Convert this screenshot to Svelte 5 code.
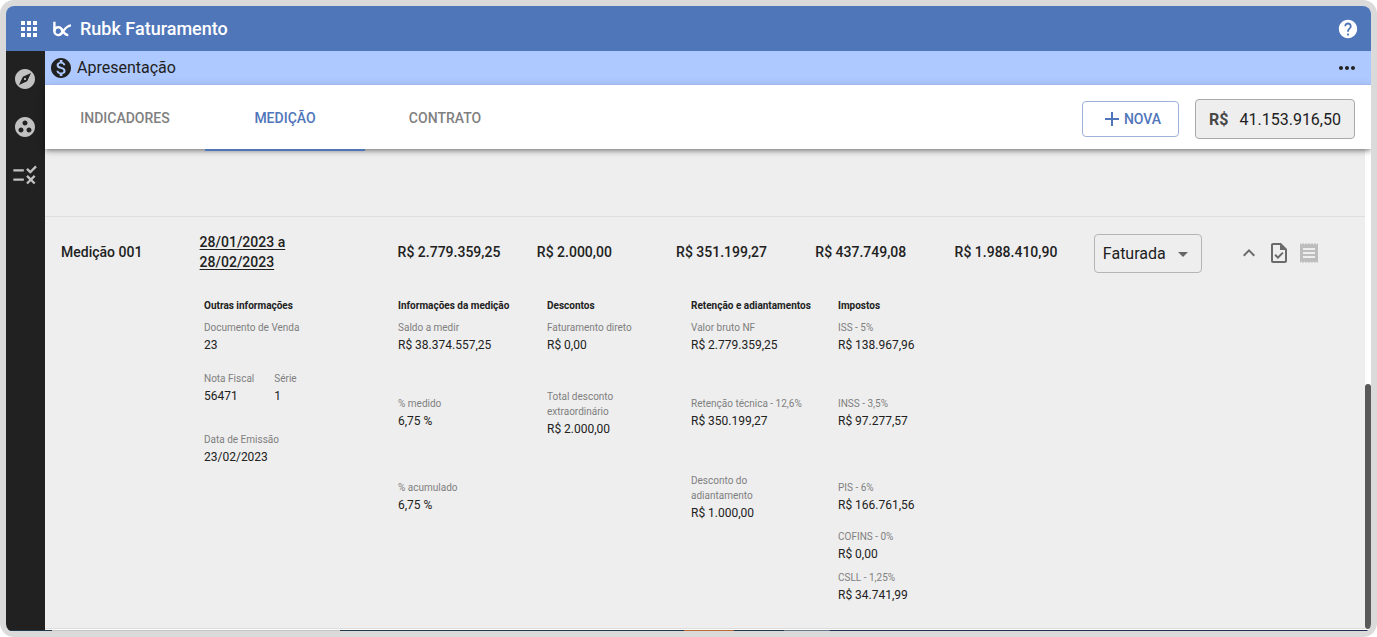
<script>
  let tab = $state('Medição');
  let status = $state('Faturada');
  const tabs = ['Indicadores', 'Medição', 'Contrato'];
  const amounts = ['R$ 2.779.359,25', 'R$ 2.000,00', 'R$ 351.199,27', 'R$ 437.749,08', 'R$ 1.988.410,90'];
  const groups = [
    {
      title: 'Informações da medição',
      items: [
        ['Saldo a medir', 'R$ 38.374.557,25'],
        ['% medido', '6,75 %'],
        ['% acumulado', '6,75 %']
      ]
    },
    {
      title: 'Descontos',
      items: [
        ['Faturamento direto', 'R$ 0,00'],
        ['Total desconto extraordinário', 'R$ 2.000,00']
      ]
    },
    {
      title: 'Retenção e adiantamentos',
      items: [
        ['Valor bruto NF', 'R$ 2.779.359,25'],
        ['Retenção técnica - 12,6%', 'R$ 350.199,27'],
        ['Desconto do adiantamento', 'R$ 1.000,00']
      ]
    },
    {
      title: 'Impostos',
      items: [
        ['ISS - 5%', 'R$ 138.967,96'],
        ['INSS - 3,5%', 'R$ 97.277,57'],
        ['PIS - 6%', 'R$ 166.761,56'],
        ['COFINS - 0%', 'R$ 0,00'],
        ['CSLL - 1,25%', 'R$ 34.741,99']
      ]
    }
  ];
  const icons = {
    apps: 'M4 8h4V4H4v4zm6 12h4v-4h-4v4zm-6 0h4v-4H4v4zm0-6h4v-4H4v4zm6 0h4v-4h-4v4zm6-10v4h4V4h-4zm-6 4h4V4h-4v4zm6 6h4v-4h-4v4zm0 6h4v-4h-4v4z',
    help: 'M12 2C6.48 2 2 6.48 2 12s4.48 10 10 10 10-4.48 10-10S17.52 2 12 2zm1 17h-2v-2h2v2zm2.07-7.75l-.9.92C13.45 12.9 13 13.5 13 15h-2v-.5c0-1.1.45-2.1 1.17-2.83l1.24-1.26c.37-.36.59-.86.59-1.41 0-1.1-.9-2-2-2s-2 .9-2 2H8c0-2.21 1.79-4 4-4s4 1.79 4 4c0 .88-.36 1.68-.93 2.25z',
    explore: 'M12 10.9c-.61 0-1.1.49-1.1 1.1s.49 1.1 1.1 1.1c.61 0 1.1-.49 1.1-1.1s-.49-1.1-1.1-1.1zM12 2C6.48 2 2 6.48 2 12s4.48 10 10 10 10-4.48 10-10S17.52 2 12 2zm2.19 12.19L6 18l3.81-8.19L18 6l-3.81 8.19z',
    group: 'M12 2C6.48 2 2 6.48 2 12s4.48 10 10 10 10-4.48 10-10S17.52 2 12 2zM8 17.5c-1.38 0-2.5-1.12-2.5-2.5s1.12-2.5 2.5-2.5 2.5 1.12 2.5 2.5-1.12 2.5-2.5 2.5zM9.5 8c0-1.38 1.12-2.5 2.5-2.5s2.5 1.12 2.5 2.5-1.12 2.5-2.5 2.5S9.5 9.38 9.5 8zm6.5 9.5c-1.38 0-2.5-1.12-2.5-2.5s1.12-2.5 2.5-2.5 2.5 1.12 2.5 2.5-1.12 2.5-2.5 2.5z',
    rule: 'M16.54 11L13 7.46l1.41-1.41 2.12 2.12 4.24-4.24 1.41 1.41L16.54 11zM11 7H2v2h9V7zm10 6.41L19.59 12 17 14.59 14.41 12 13 13.41 15.59 16 13 18.59 14.41 20 17 17.41 19.59 20 21 18.59 18.41 16 21 13.41zM11 15H2v2h9v-2z',
    money: 'M12 2C6.48 2 2 6.48 2 12s4.48 10 10 10 10-4.48 10-10S17.52 2 12 2zm1.41 16.09V20h-2.67v-1.93c-1.71-.36-3.16-1.46-3.27-3.4h1.96c.1 1.05.82 1.87 2.65 1.87 1.96 0 2.4-.98 2.4-1.59 0-.83-.44-1.61-2.67-2.14-2.48-.6-4.18-1.62-4.18-3.67 0-1.72 1.39-2.84 3.11-3.21V4h2.67v1.95c1.86.45 2.79 1.86 2.85 3.39H14.3c-.05-1.11-.64-1.87-2.22-1.87-1.5 0-2.4.68-2.4 1.64 0 .84.65 1.39 2.67 1.91s4.18 1.39 4.18 3.91c-.01 1.83-1.38 2.83-3.12 3.16z',
    more: 'M6 10c-1.1 0-2 .9-2 2s.9 2 2 2 2-.9 2-2-.9-2-2-2zm12 0c-1.1 0-2 .9-2 2s.9 2 2 2 2-.9 2-2-.9-2-2-2zm-6 0c-1.1 0-2 .9-2 2s.9 2 2 2 2-.9 2-2-.9-2-2-2z',
    add: 'M19 13h-6v6h-2v-6H5v-2h6V5h2v6h6v2z',
    up: 'M12 8l-6 6 1.41 1.41L12 10.83l4.59 4.58L18 14z',
    drop: 'M7 10l5 5 5-5z',
    task: 'M14 2H6c-1.1 0-2 .9-2 2v16c0 1.1.89 2 1.99 2H18c1.1 0 2-.9 2-2V8l-6-6zm4 18H6V4h7v5h5v11zm-9.18-6.95L7.4 14.46 10.94 18l5.66-5.66-1.41-1.41-4.24 4.24-2.13-2.12z',
    receipt: 'M18 17H6v-2h12v2zm0-4H6v-2h12v2zm0-4H6V7h12v2zM3 22l1.5-1.5L6 22l1.5-1.5L9 22l1.5-1.5L12 22l1.5-1.5L15 22l1.5-1.5L18 22l1.5-1.5L21 22V2l-1.5 1.5L18 2l-1.5 1.5L15 2l-1.5 1.5L12 2l-1.5 1.5L9 2 7.5 3.5 6 2 4.5 3.5 3 2v20z'
  };
</script>

{#snippet icon(name, size = 24)}
  <svg width={size} height={size} viewBox="0 0 24 24" fill="currentColor" aria-hidden="true"><path d={icons[name]} /></svg>
{/snippet}

{#snippet metric(label, value)}
  <div class="metric">
    <dt>{label}</dt>
    <dd>{value}</dd>
  </div>
{/snippet}

<div class="frame">
  <div class="app">
    <header class="topbar">
      <button class="icon-btn" aria-label="Aplicativos">{@render icon('apps')}</button>
      <svg class="logo" width="20" height="16" viewBox="0 0 20 16" fill="none" stroke="currentColor" stroke-width="2.4" aria-hidden="true">
        <path d="M2.400 0.800V10.200" />
        <circle cx="6.300" cy="10.200" r="3.900" />
        <path d="M6.300 14.100C11.500 14.100 11.800 4.800 19 4.400" />
        <path d="M9.300 7.600C11.200 10.600 12.400 14 16.300 14.100" />
      </svg>
      <h1>Rubk Faturamento</h1>
      <button class="icon-btn end" aria-label="Ajuda">{@render icon('help', 22)}</button>
    </header>

    <div class="body">
      <nav class="rail" aria-label="Principal">
        <button class="icon-btn" aria-label="Explorar">{@render icon('explore')}</button>
        <button class="icon-btn" aria-label="Grupos">{@render icon('group')}</button>
        <button class="icon-btn" aria-label="Regras">{@render icon('rule', 28)}</button>
      </nav>

      <main>
        <div class="titlebar">
          {@render icon('money')}
          <h2>Apresentação</h2>
          <button class="icon-btn end" aria-label="Mais opções">{@render icon('more')}</button>
        </div>

        <div class="toolbar">
          <div class="tabs" role="tablist">
            {#each tabs as name}
              <button class="tab" role="tab" class:active={tab === name} aria-selected={tab === name} onclick={() => (tab = name)}>{name}</button>
            {/each}
          </div>
          <button class="new">{@render icon('add')}Nova</button>
          <label class="total">
            <span>R$</span>
            <input type="text" value="41.153.916,50" readonly />
          </label>
        </div>

        <div class="content">
          <div class="scroll">
            <table>
              <colgroup>
                <col class="c-name" />
                <col class="c-period" />
                {#each amounts as _}<col class="c-amount" />{/each}
                <col class="c-amount" />
                <col />
              </colgroup>
              <tbody>
                <tr class="summary">
                  <td>Medição 001</td>
                  <td><a href="#periodo">28/01/2023 a<br />28/02/2023</a></td>
                  {#each amounts as amount}<td>{amount}</td>{/each}
                  <td>
                    <div class="select">
                      <select aria-label="Situação" bind:value={status}>
                        <option>Faturada</option>
                      </select>
                      {@render icon('drop')}
                    </div>
                  </td>
                  <td>
                    <div class="actions">
                      <button class="icon-btn" aria-label="Recolher">{@render icon('up')}</button>
                      <button class="icon-btn" aria-label="Aprovar">{@render icon('task')}</button>
                      <button class="icon-btn" aria-label="Recibo" disabled>{@render icon('receipt')}</button>
                    </div>
                  </td>
                </tr>
                <tr>
                  <td class="details-cell" colspan="9">
                    <div class="details">
                      <section>
                        <h3>Outras informações</h3>
                        <dl>
                          {@render metric('Documento de Venda', '23')}
                          <div class="pair">
                            {@render metric('Nota Fiscal', '56471')}
                            {@render metric('Série', '1')}
                          </div>
                          {@render metric('Data de Emissão', '23/02/2023')}
                        </dl>
                      </section>
                      {#each groups as group}
                        <section>
                          <h3>{group.title}</h3>
                          <dl class="values">
                            {#each group.items as [label, value]}
                              {@render metric(label, value)}
                            {/each}
                          </dl>
                        </section>
                      {/each}
                    </div>
                  </td>
                </tr>
              </tbody>
            </table>
          </div>
          <div class="track" aria-hidden="true"><div class="thumb"></div></div>
        </div>
      </main>
    </div>
    <div class="strip" aria-hidden="true"></div>
  </div>
</div>

<style>
  :global(body) {
    background: #fff;
  }
  * {
    box-sizing: border-box;
  }
  h1,
  h2,
  h3,
  dl,
  dd {
    margin: 0;
  }
  svg {
    display: block;
    flex: none;
  }
  button,
  input,
  select {
    font: inherit;
    color: inherit;
  }
  .frame {
    min-height: 100vh;
    display: flex;
    padding: 6px 6px 5px;
    background: #dadada;
    border-radius: 14px;
    font-family: Roboto, "Liberation Sans", sans-serif;
    color: #212121;
  }
  .app {
    flex: 1;
    min-width: 0;
    display: flex;
    flex-direction: column;
    background: #fff;
    border-radius: 8px;
    overflow: hidden;
  }
  .icon-btn {
    display: flex;
    padding: 0;
    border: 0;
    background: none;
    cursor: pointer;
  }
  .end {
    margin-left: auto;
  }
  .topbar {
    display: flex;
    align-items: center;
    height: 45px;
    padding: 0 12px 0 11px;
    background: #5076ba;
    color: #fff;
  }
  .logo {
    margin: 0 8px 0 11px;
  }
  h1 {
    font-size: 18px;
    font-weight: 500;
    line-height: 24px;
  }
  .body {
    flex: 1;
    display: flex;
  }
  .rail {
    width: 39px;
    flex: none;
    display: flex;
    flex-direction: column;
    align-items: center;
    gap: 24px;
    padding: 16px 1px 0 0;
    background: #212121;
    color: #c1c1c1;
  }
  .rail .icon-btn {
    height: 24px;
    align-items: center;
  }
  main {
    flex: 1;
    min-width: 0;
    display: flex;
    flex-direction: column;
  }
  .titlebar {
    display: flex;
    align-items: center;
    gap: 4px;
    height: 34px;
    padding: 0 12px 0 4px;
    background: #aec9ff;
  }
  h2 {
    font-size: 16px;
    font-weight: 400;
    line-height: 24px;
  }
  .toolbar {
    position: relative;
    z-index: 1;
    display: flex;
    align-items: center;
    gap: 16px;
    height: 64px;
    padding-right: 16px;
    background: #fff;
    box-shadow: 0 2px 4px -1px rgba(0, 0, 0, 0.3), 0 3px 5px rgba(0, 0, 0, 0.16), 0 1px 10px rgba(0, 0, 0, 0.12);
  }
  .tabs {
    display: flex;
    align-self: flex-start;
    margin-right: auto;
  }
  .tab {
    width: 160px;
    height: 66px;
    padding: 2px 0 0;
    border: 0;
    border-bottom: 2px solid transparent;
    background: none;
    color: #7f7f7f;
    font-size: 14px;
    font-weight: 500;
    text-transform: uppercase;
    cursor: pointer;
  }
  .tab.active {
    color: #5076ba;
    border-color: #5076ba;
  }
  .new {
    display: flex;
    align-items: center;
    justify-content: center;
    height: 36px;
    min-width: 97px;
    margin-top: 4px;
    padding: 0 15px;
    border: 1px solid #9db3da;
    border-radius: 4px;
    background: none;
    color: #5076ba;
    font-size: 14px;
    font-weight: 500;
    text-transform: uppercase;
    cursor: pointer;
  }
  .total {
    display: flex;
    align-items: center;
    width: 160px;
    height: 40px;
    margin-top: 4px;
    padding: 0 13px;
    border: 1px solid #a9a9a9;
    border-radius: 4px;
    background: #eee;
    font-size: 16px;
  }
  .total span {
    font-weight: 700;
    color: #484848;
  }
  .total input {
    flex: 1;
    min-width: 0;
    padding: 0;
    border: 0;
    outline: 0;
    background: none;
    text-align: right;
  }
  .content {
    flex: 1;
    display: flex;
  }
  .scroll {
    flex: 1;
    min-width: 0;
    margin-bottom: 1px;
    padding-top: 67px;
    background: #eee;
    border-bottom: 1px solid #dcdcdc;
  }
  .track {
    width: 6px;
    flex: none;
    display: flex;
    align-items: flex-end;
    padding-bottom: 1px;
  }
  .thumb {
    width: 100%;
    height: 51%;
    border-radius: 3px;
    background: #595959;
  }
  table {
    width: 100%;
    table-layout: fixed;
    border-collapse: collapse;
    border-top: 1px solid #dedede;
  }
  .c-name {
    width: 10.5%;
  }
  .c-period {
    width: 15%;
  }
  .c-amount {
    width: 10.55%;
  }
  td {
    padding: 0 0 0 16px;
    text-align: left;
    white-space: nowrap;
  }
  .summary td {
    height: 72px;
    padding-bottom: 2px;
    font-size: 14px;
    font-weight: 500;
    line-height: 20px;
  }
  .summary a {
    color: inherit;
    text-decoration: underline;
    text-underline-offset: 2px;
  }
  .select {
    display: grid;
    align-items: center;
    width: 108px;
    height: 39px;
    margin-top: 4px;
    border: 1px solid #b5b5b5;
    border-radius: 4px;
    font-size: 16px;
    font-weight: 400;
  }
  .select select {
    grid-area: 1 / 1;
    width: 100%;
    height: 100%;
    padding: 0 28px 0 8px;
    border: 0;
    appearance: none;
    background: none;
  }
  .select svg {
    grid-area: 1 / 1;
    justify-self: end;
    margin-right: 6px;
    pointer-events: none;
    color: #666;
  }
  .actions {
    display: flex;
    gap: 6px;
    margin: 2px 0 0 4px;
    color: #6b6b6b;
  }
  .actions .icon-btn:disabled {
    color: #bdbdbd;
    cursor: default;
  }
  .details-cell {
    padding: 9px 0 12px 159px;
    white-space: normal;
    vertical-align: top;
  }
  .details {
    display: grid;
    grid-template-columns: 194fr 149fr 144fr 147fr 527fr;
    font-size: 10px;
    line-height: 15px;
  }
  h3 {
    margin-bottom: 7px;
    font-size: 10px;
    font-weight: 700;
    line-height: 15px;
    white-space: nowrap;
  }
  dt {
    max-width: 112px;
    color: #7f7f7f;
  }
  dd {
    font-size: 12px;
    line-height: 20px;
  }
  .pair {
    display: flex;
    gap: 20px;
    margin: 16px 0 26px;
  }
  .values .metric {
    display: flex;
    flex-direction: column;
    justify-content: center;
    margin-bottom: 6px;
  }
  .values .metric:nth-child(2),
  .values .metric:nth-child(3) {
    min-height: 50px;
  }
  .values .metric:nth-child(-n + 2) {
    margin-bottom: 34px;
  }
  .strip {
    height: 2px;
    border-bottom: 1px solid #dadada;
    background: linear-gradient(90deg, #22384b 0 3.4%, #c4c4c4 3.4% 24.5%, #22384b 24.5% 49.7%, #b96b35 49.7% 53.3%, #22384b 53.3% 57%, #66788a 57% 60.4%, #202d50 60.4%);
  }
</style>
